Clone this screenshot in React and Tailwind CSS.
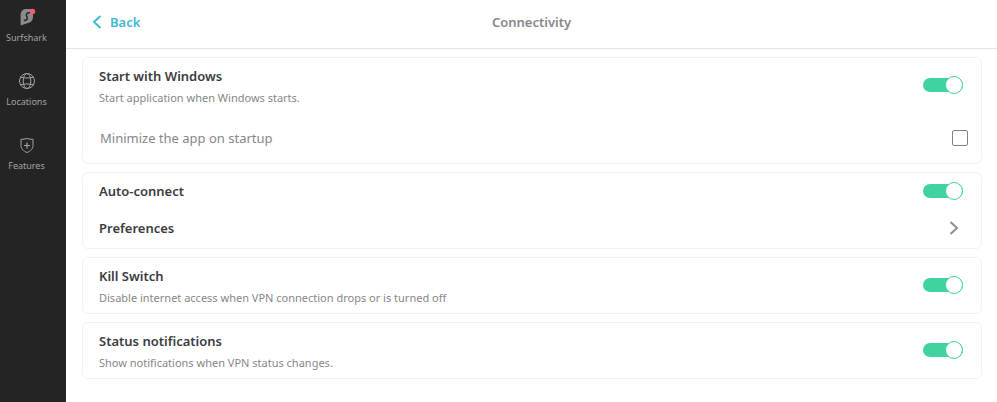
import React from 'react';

const SurfsharkIcon = () => (
  <svg width="18" height="18" viewBox="0 0 18 18" aria-hidden="true">
    <path d="M8.200 1H15v7.400c0 3.400-1.400 5.300-4.200 6.400L2.600 17.500V7.200C2.600 3.400 4.600 1 8.200 1z" fill="#8a8b8e" />
    <path d="M12 4.800c-2.400-.4-3.600.6-3.600 2.400 0 1.200.9 1.500.9 2.700 0 1.700-1.400 2.600-3.500 2.500" fill="none" stroke="#242424" strokeWidth="1.500" />
    <circle cx="14.500" cy="3.500" r="2.700" fill="#fb5a6f" />
  </svg>
);

const GlobeIcon = () => (
  <svg width="18" height="18" viewBox="0 0 18 18" fill="none" stroke="#a2a3a5" aria-hidden="true">
    <circle cx="9" cy="9" r="7.500" />
    <ellipse cx="9" cy="9" rx="3.800" ry="7.500" />
    <path d="M2.500 5.200c3.500 1.100 9.500 1.100 13 0M2.500 12.800c3.500-1.100 9.500-1.100 13 0" />
  </svg>
);

const ShieldIcon = () => (
  <svg width="18" height="18" viewBox="0 0 18 18" fill="none" stroke="#a2a3a5" aria-hidden="true">
    <path d="M9 2.500c2 .6 4 .8 6 .8v6.400c0 3.100-2.500 5.500-6 6.800-3.500-1.300-6-3.700-6-6.800V3.300c2 0 4-.2 6-.8z" />
    <path d="M9 6.500v6M6 9.500h6" strokeWidth="1.200" />
  </svg>
);

const Toggle = ({ id }) => (
  <input
    id={id}
    type="checkbox"
    role="switch"
    defaultChecked
    className="flex h-[14px] w-10 shrink-0 cursor-pointer appearance-none items-center rounded-full bg-[#c4c6ca] before:size-[18px] before:shrink-0 before:rounded-full before:border before:border-[#c4c6ca] before:bg-white checked:justify-end checked:bg-[#40d3a0] checked:before:border-[#40d3a0]"
  />
);

const Card = ({ children }) => (
  <section className="rounded-md border border-[#f2f2f5]">{children}</section>
);

const Setting = ({ id, title, description }) => (
  <div className="flex items-center justify-between pr-[18px] pb-0.5 pl-4">
    <div className="pt-2 pb-[3px]">
      <label htmlFor={id} className="block text-[13px] leading-5 font-semibold text-[#3b3c3e]">{title}</label>
      <p className="mt-0.5 text-[11px] leading-5 text-[#86878a]">{description}</p>
    </div>
    <Toggle id={id} />
  </div>
);

const navItems = [
  { label: 'Surfshark', icon: SurfsharkIcon },
  { label: 'Locations', icon: GlobeIcon },
  { label: 'Features', icon: ShieldIcon },
];

const App = () => (
  <div className="flex min-h-screen bg-white font-['Noto_Sans','Open_Sans',sans-serif]">
    <nav className="flex w-[66px] shrink-0 flex-col gap-[26px] bg-[#242424] pt-2 pr-[13px]">
      {navItems.map(({ label, icon: Icon }) => (
        <a key={label} href="#" className="flex flex-col items-center gap-1 text-[9px] leading-4 text-[#a2a3a5]">
          <Icon />
          {label}
        </a>
      ))}
    </nav>

    <main className="min-w-0 flex-1">
      <header className="grid h-[49px] grid-cols-3 items-center border-b border-[#e4e5ea] pb-1">
        <button type="button" className="flex items-center gap-2 justify-self-start pl-[26px] text-[13px] leading-5 font-semibold text-[#41b8d5]">
          <svg width="10" height="14" viewBox="0 0 10 14" fill="none" stroke="currentColor" strokeWidth="2" aria-hidden="true">
            <path d="M8.500 1 2 7l6.500 6" />
          </svg>
          Back
        </button>
        <h1 className="text-center text-[13px] leading-5 font-semibold text-[#86878a]">Connectivity</h1>
      </header>

      <div className="flex flex-col gap-2 py-2 pr-[15px] pl-4">
        <Card>
          <Setting id="start" title="Start with Windows" description="Start application when Windows starts." />
          <div className="flex h-[50px] items-center justify-between pr-[13px] pl-[17px]">
            <label htmlFor="minimize" className="text-[13px] leading-5 text-[#86878a]">Minimize the app on startup</label>
            <input id="minimize" type="checkbox" className="size-4 cursor-pointer appearance-none rounded-[2px] border border-[#808185] checked:bg-[#40d3a0]" />
          </div>
        </Card>

        <Card>
          <div className="flex h-[35px] items-center justify-between pr-[18px] pl-4">
            <label htmlFor="auto" className="text-[13px] leading-5 font-semibold text-[#3b3c3e]">Auto-connect</label>
            <Toggle id="auto" />
          </div>
          <button type="button" className="flex h-10 w-full items-center justify-between pr-[22px] pl-4 text-[13px] leading-5 font-semibold text-[#3b3c3e]">
            Preferences
            <svg width="10" height="14" viewBox="0 0 10 14" fill="none" stroke="#8e8f93" strokeWidth="2" aria-hidden="true">
              <path d="M1.500 1 8 7l-6.500 6" />
            </svg>
          </button>
        </Card>

        <Card>
          <Setting id="kill" title="Kill Switch" description="Disable internet access when VPN connection drops or is turned off" />
        </Card>

        <Card>
          <Setting id="status" title="Status notifications" description="Show notifications when VPN status changes." />
        </Card>
      </div>
    </main>
  </div>
);

export default App;
